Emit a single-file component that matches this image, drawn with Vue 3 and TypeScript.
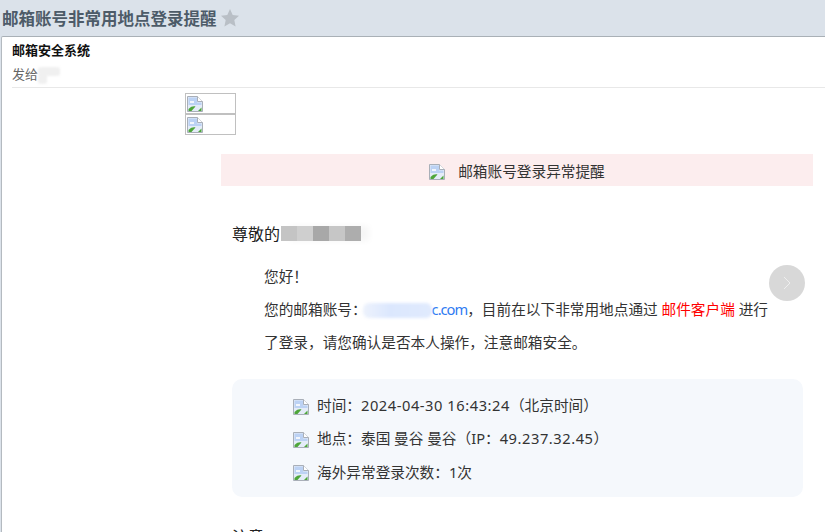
<script setup lang="ts">
const tiles = ['#c4c4c4', '#cfcfcf', '#a8a8a8', '#c6c6c6', '#adadad']
const rows = [
  { id: 'time', before: '时间\uFF1A', num: '2024-04-30 16:43:24', after: '\uFF08北京时间\uFF09' },
  { id: 'place', before: '地点\uFF1A泰国 曼谷 曼谷\uFF08IP\uFF1A', num: '49.237.32.45', after: '\uFF09' },
  { id: 'count', before: '海外异常登录次数\uFF1A1次', num: '', after: '' },
]
</script>

<template>
  <div class="page">
    <header class="topbar">
      <h1 class="title">邮箱账号非常用地点登录提醒</h1>
      <svg class="star" viewBox="0 0 20 20" width="20" height="20"><path d="M10 1l2.700 6 6.300.7-4.700 4.300 1.300 6.500L10 15.200 4.400 18.500 5.700 12 1 7.700 7.300 7z" fill="#b9bfc6"/></svg>
    </header>
    <main class="sheet">
      <div class="sender">
        <div class="sender-name">邮箱安全系统</div>
        <div class="sender-to">发给<span class="to-blur"></span></div>
      </div>
      <div class="logo-stack">
        <div class="img-box"><svg class="broken" viewBox="0 0 16 16"><path d="M.5.500h10l5 5v10H.500z" fill="#e4ecf8" stroke="#a9afb8"/><path d="M1.500 1.500h8.500v5h4.500v2.500L1.500 9z" fill="#bcd2f4"/><path d="M3 5h4v2H3z" fill="#f2f6fc"/><path d="M1.500 15v-2c2.500-2.500 5-3 7-2.500L4.500 15z" fill="#4ea63a"/><path d="M11 15l3.500-3.500V15z" fill="#4ea63a"/><path d="M10.500.500v5h5" fill="#fff" stroke="#a9afb8"/></svg></div>
        <div class="img-box"><svg class="broken" viewBox="0 0 16 16"><path d="M.5.500h10l5 5v10H.500z" fill="#e4ecf8" stroke="#a9afb8"/><path d="M1.500 1.500h8.500v5h4.500v2.500L1.500 9z" fill="#bcd2f4"/><path d="M3 5h4v2H3z" fill="#f2f6fc"/><path d="M1.500 15v-2c2.500-2.500 5-3 7-2.500L4.500 15z" fill="#4ea63a"/><path d="M11 15l3.500-3.500V15z" fill="#4ea63a"/><path d="M10.500.500v5h5" fill="#fff" stroke="#a9afb8"/></svg></div>
      </div>
      <section class="mail">
        <div class="banner">
          <svg class="broken" viewBox="0 0 16 16"><path d="M.5.500h10l5 5v10H.500z" fill="#e4ecf8" stroke="#a9afb8"/><path d="M1.500 1.500h8.500v5h4.500v2.500L1.500 9z" fill="#bcd2f4"/><path d="M3 5h4v2H3z" fill="#f2f6fc"/><path d="M1.500 15v-2c2.500-2.500 5-3 7-2.500L4.500 15z" fill="#4ea63a"/><path d="M11 15l3.500-3.500V15z" fill="#4ea63a"/><path d="M10.500.500v5h5" fill="#fff" stroke="#a9afb8"/></svg>
          <span>邮箱账号登录异常提醒</span>
        </div>
        <div class="greet">尊敬的<span class="mosaic"><i v-for="(t, i) in tiles" :key="i" :style="{ background: t }"></i></span></div>
        <div class="copy">
          <p>您好&#xFF01;</p>
          <p>您的邮箱账号&#xFF1A;<a class="mail-link"><span class="mail-blur"></span>c.com</a>&#xFF0C;目前在以下非常用地点通过 <em>邮件客户端</em> 进行</p>
          <p>了登录&#xFF0C;请您确认是否本人操作&#xFF0C;注意邮箱安全&#x3002;</p>
        </div>
        <div class="info">
          <div v-for="r in rows" :key="r.id" class="info-row">
            <svg class="broken" viewBox="0 0 16 16"><path d="M.5.500h10l5 5v10H.500z" fill="#e4ecf8" stroke="#a9afb8"/><path d="M1.500 1.500h8.500v5h4.500v2.500L1.500 9z" fill="#bcd2f4"/><path d="M3 5h4v2H3z" fill="#f2f6fc"/><path d="M1.500 15v-2c2.500-2.500 5-3 7-2.500L4.500 15z" fill="#4ea63a"/><path d="M11 15l3.500-3.500V15z" fill="#4ea63a"/><path d="M10.500.500v5h5" fill="#fff" stroke="#a9afb8"/></svg>
            <span>{{ r.before }}<span class="num">{{ r.num }}</span>{{ r.after }}</span>
          </div>
        </div>
        <div class="note">注意</div>
      </section>
      <button class="next" aria-label="下一封"><svg viewBox="0 0 12 16" width="12" height="16"><path d="M3 2l6 6-6 6" fill="none" stroke="#eeeeee" stroke-width="1"/></svg></button>
    </main>
  </div>
</template>

<style>
html, body { margin: 0; background: #dbe2ea; overflow: hidden; }
</style>

<style scoped>
.page {
  width: 825px;
  height: 532px;
  overflow: hidden;
  display: flex;
  flex-direction: column;
  background: #dbe2ea;
  font-family: "Noto Sans", "Noto Sans CJK SC", sans-serif;
  color: #222;
}
.topbar {
  height: 36px;
  flex: none;
  display: flex;
  align-items: center;
  padding-left: 2px;
  gap: 3px;
}
.title {
  margin: 0;
  font-size: 16.5px;
  font-weight: 700;
  color: #4d5b68;
  white-space: nowrap;
}
.sheet {
  position: relative;
  flex: 1;
  margin-left: 1px;
  background: #fff;
  border-top: 1px solid #a9b0b6;
  border-left: 1px solid #b4bac0;
  border-top-left-radius: 2px;
  min-height: 0;
}
.sender {
  margin-left: 10px;
  padding: 5px 0 0;
  height: 51px;
  box-sizing: border-box;
  border-bottom: 1px solid #e8e8e8;
  width: 813px;
}
.sender-name {
  font-size: 13px;
  font-weight: 700;
  color: #111;
  line-height: 17px;
}
.sender-to {
  display: flex;
  align-items: center;
  font-size: 13px;
  color: #666;
  line-height: 17px;
  margin-top: 7px;
}
.to-blur {
  position: relative;
  width: 22px;
  height: 9px;
  margin-top: -6px;
  border-radius: 3px;
  background: #f0f0f0;
  filter: blur(1px);
}
.to-blur::after {
  content: "";
  position: absolute;
  left: 0;
  top: 7px;
  width: 9px;
  height: 10px;
  border-radius: 3px;
  background: #f0f0f0;
}
.logo-stack {
  margin: 5px 0 0 183px;
  width: 51px;
}
.img-box {
  height: 21px;
  box-sizing: border-box;
  border: 1px solid #c0c0c0;
  padding: 1px;
  display: flex;
  align-items: flex-start;
}
.img-box .broken { margin-top: 1px; }
.broken {
  width: 16px;
  height: 16px;
  flex: none;
  display: block;
}
.mail {
  margin: 19px 0 0 219px;
  width: 592px;
}
.banner {
  height: 32px;
  background: #fcedee;
  display: flex;
  align-items: center;
  justify-content: center;
  gap: 13px;
  font-size: 14.67px;
  color: #333;
}
.banner .broken { margin-top: 3px; }
.greet {
  margin: 35px 0 0 11px;
  display: flex;
  align-items: center;
  height: 24px;
  font-size: 16px;
  color: #222;
}
.mosaic {
  display: flex;
  height: 15px;
  margin-left: 1px;
  box-shadow: 8px 0 6px #f6f6f6;
}
.mosaic i { width: 16px; display: block; }
.copy {
  margin: 15px 0 0 43px;
  font-size: 14.67px;
  color: #333;
  line-height: 33px;
  white-space: nowrap;
}
.copy p { margin: 0; }
.copy em { font-style: normal; color: #f00; }
.mail-link { color: #2f7bf2; letter-spacing: -1px; }
.mail-blur {
  display: inline-block;
  vertical-align: -3px;
  width: 69px;
  height: 15px;
  margin-left: -4px;
  border-radius: 6px;
  background: linear-gradient(90deg, #edf2fc, #dbe7fd 40%, #e0eafd);
  filter: blur(1.500px);
}
.info {
  margin: 20px 0 0 11px;
  width: 571px;
  height: 118px;
  box-sizing: border-box;
  background: #f5f8fc;
  border-radius: 10px;
  padding: 9px 0 0 61px;
  font-size: 14.67px;
  color: #333;
}
.info-row {
  height: 33.250px;
  display: flex;
  align-items: center;
  gap: 8px;
  white-space: pre;
}
.num { letter-spacing: 0.55px; }
.info-row .broken { margin-top: 4px; }
.note {
  margin: 28px 0 0 11px;
  font-size: 16px;
  line-height: 24px;
  color: #222;
}
.next {
  position: absolute;
  left: 767px;
  top: 228px;
  width: 36px;
  height: 36px;
  border: 0;
  padding: 0;
  border-radius: 50%;
  background: #d8d8d8;
  display: flex;
  align-items: center;
  justify-content: center;
}
</style>
